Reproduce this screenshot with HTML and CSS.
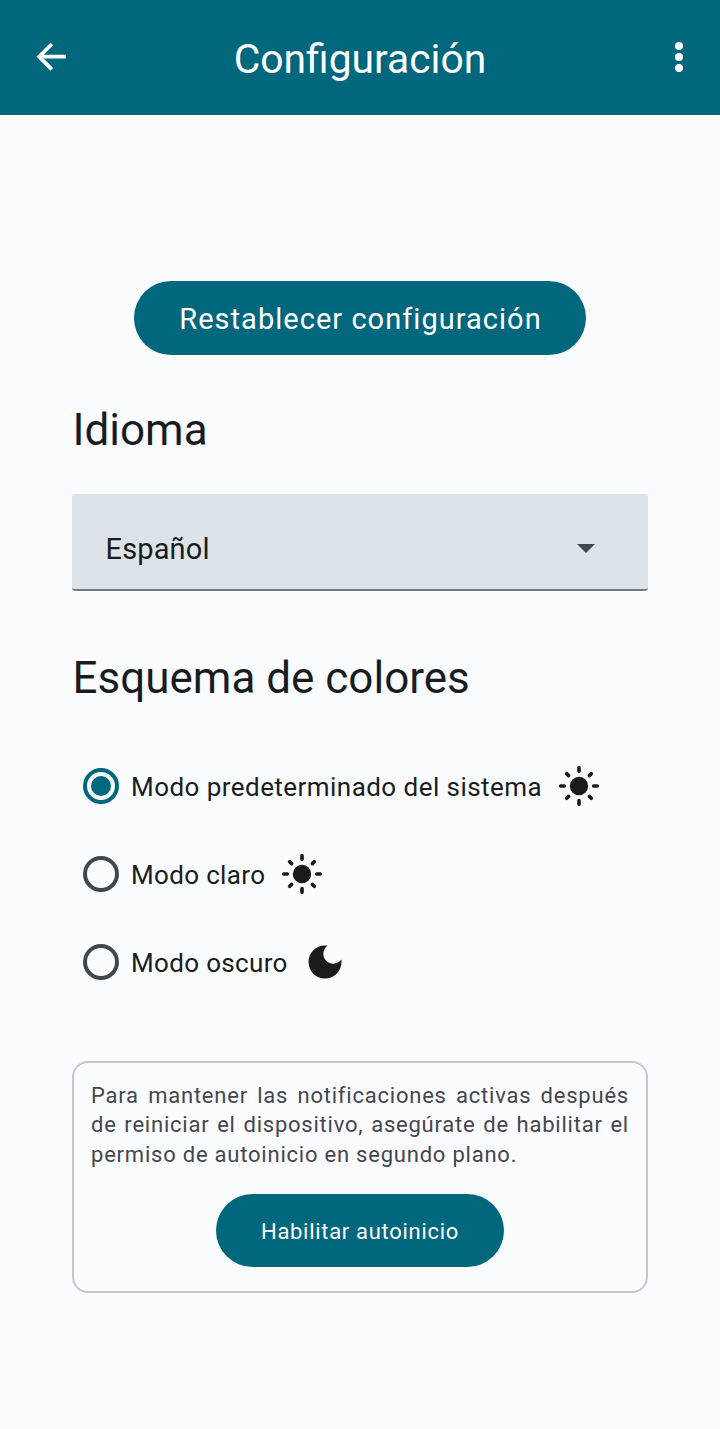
FILE: index.html
```html
<!DOCTYPE html>
<html lang="es">
<head>
<meta charset="utf-8">
<title>Configuración</title>
<link rel="stylesheet" href="styles.css">
</head>
<body>
<svg class="defs" aria-hidden="true">
  <symbol id="sun" viewBox="0 0 24 24">
    <circle cx="12" cy="12" r="5" fill="currentColor"/>
    <path d="M12 2v2M12 20v2M2 12h2M20 12h2M5.28 5.28l1.06 1.06M17.66 17.66l1.06 1.06M18.72 5.28l-1.06 1.06M6.34 17.66l-1.06 1.06" fill="none" stroke="currentColor" stroke-width="2" stroke-linecap="round"/>
  </symbol>
</svg>
<header class="app-bar">
  <button class="icon-button" aria-label="Atrás"><svg class="back" viewBox="0 0 30 30"><path d="M30 14.7H4M15.8 2L3.2 14.7L15.8 27.4" fill="none" stroke="currentColor" stroke-width="3.8"/></svg></button>
  <h1 class="app-title">Configuración</h1>
  <button class="icon-button menu" aria-label="Más opciones"><svg class="more" viewBox="0 0 10 32"><circle cx="5" cy="5" r="4"/><circle cx="5" cy="16" r="4"/><circle cx="5" cy="27" r="4"/></svg></button>
</header>
<main class="content">
  <button class="button reset"><span>Restablecer configuración</span></button>
  <h2 class="heading language">Idioma</h2>
  <div class="select"><span>Español</span><svg class="caret" viewBox="0 0 18 9"><path d="M0 0h18L9 9z"/></svg></div>
  <h2 class="heading scheme">Esquema de colores</h2>
  <div class="options">
    <label class="option"><i class="radio checked"></i><span class="option-text system">Modo predeterminado del sistema</span><svg class="mode"><use href="#sun"/></svg></label>
    <label class="option"><i class="radio"></i><span class="option-text">Modo claro</span><svg class="mode"><use href="#sun"/></svg></label>
    <label class="option"><i class="radio"></i><span class="option-text">Modo oscuro</span><svg class="mode" viewBox="0 0 24 24"><path d="M12 3c-4.97 0-9 4.03-9 9s4.03 9 9 9 9-4.03 9-9c0-.46-.04-.92-.1-1.36-.98 1.37-2.58 2.26-4.4 2.26-2.98 0-5.4-2.42-5.4-5.4 0-1.81.89-3.42 2.26-4.4C12.92 3.04 12.46 3 12 3z" fill="currentColor"/></svg></label>
  </div>
  <section class="notice">
    <p class="notice-text">Para mantener las notificaciones activas después de reiniciar el dispositivo, asegúrate de habilitar el permiso de autoinicio en segundo plano.</p>
    <button class="button autostart"><span>Habilitar autoinicio</span></button>
  </section>
</main>
</body>
</html>
```
FILE: styles.css
```css
* { box-sizing: border-box; }
body { margin: 0; min-height: 1429px; background: #fbfcff; color: #191c1e; font-family: Roboto, sans-serif; }
button { border: 0; padding: 0; background: none; color: #fff; font-family: inherit; }
.defs { position: absolute; width: 0; height: 0; }
.app-bar { height: 115px; padding: 0 20px 0 28px; background: #00677d; color: #fff; display: grid; grid-template-columns: 46px 1fr 42px; align-items: center; }
.icon-button { height: 46px; margin-bottom: 2px; display: flex; align-items: center; justify-content: center; }
.back { width: 30px; height: 30px; }
.more { width: 10px; height: 32px; fill: currentColor; }
.app-title { margin: 3px 12px 0 0; text-align: center; font-size: 40.8px; font-weight: 400; line-height: 48px; }
.content { padding: 166px 72px 0; display: flex; flex-direction: column; }
.button { align-self: center; border-radius: 37px; background: #00677d; display: flex; align-items: center; justify-content: center; white-space: nowrap; }
.reset { width: 452px; height: 74px; padding: 1px 0 0 1px; font-size: 29px; letter-spacing: 1.03px; }
.heading { margin: 0; height: 52px; line-height: 52px; padding-left: .5px; font-size: 44px; font-weight: 400; white-space: nowrap; }
.language { margin-top: 49px; }
.select { margin-top: 38px; height: 97px; padding: 12px 53.5px 0 33.5px; border-bottom: 2px solid #777a7f; border-radius: 2px 2px 4px 4px; background: #dce4ea; display: flex; align-items: center; justify-content: space-between; font-size: 29px; letter-spacing: .15px; }
.select span { padding-top: 2px; }
.caret { width: 18px; height: 9px; margin-top: 1px; fill: #45464f; }
.scheme { margin-top: 61px; }
.options { margin-top: 38px; padding-left: 11px; }
.option { height: 88px; display: flex; align-items: center; font-size: 26px; }
.radio { width: 36px; height: 36px; border: 4px solid #40484c; border-radius: 50%; display: flex; align-items: center; justify-content: center; }
.checked { border-color: #00677d; }
.checked::after { content: ""; width: 20px; height: 20px; border-radius: 50%; background: #00677d; }
.option-text { margin: 2px 15px 0 12px; white-space: nowrap; letter-spacing: .34px; }
.option-text.system { letter-spacing: .45px; }
.mode { width: 44px; height: 44px; }
.notice { margin-top: 55px; height: 232px; border: 2px solid #c5c6d0; border-radius: 16px; padding: 18px 17px 0; display: flex; flex-direction: column; }
.notice-text { margin: 0; color: #45464f; font-size: 22px; line-height: 29.4px; letter-spacing: .78px; text-align: justify; }
.autostart { margin-top: 25px; width: 288px; height: 73px; font-size: 22px; padding-top: 2px; letter-spacing: .7px; }
```
